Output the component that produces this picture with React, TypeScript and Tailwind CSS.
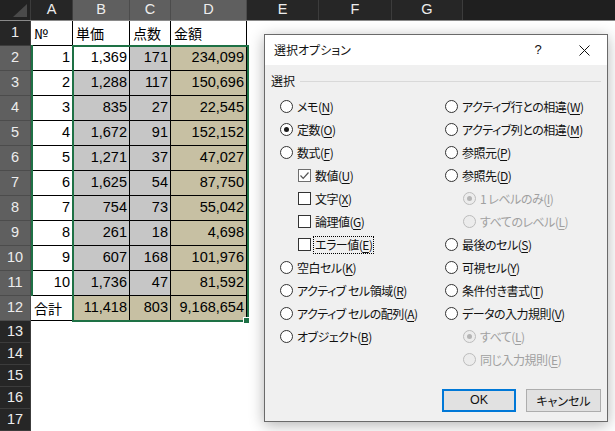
import React from 'react';

const JP = "font-['Noto_Sans_CJK_JP',sans-serif]";

const COLS = [
  { id: 'A', w: 'w-[42px]', sel: false },
  { id: 'B', w: 'w-[57px]', sel: true },
  { id: 'C', w: 'w-[41px]', sel: true },
  { id: 'D', w: 'w-[76px]', sel: true },
  { id: 'E', w: 'w-[72px]', sel: false },
  { id: 'F', w: 'w-[73px]', sel: false },
  { id: 'G', w: 'w-[71px]', sel: false },
];

const DATA = [
  ['1', '1,369', '171', '234,099'],
  ['2', '1,288', '117', '150,696'],
  ['3', '835', '27', '22,545'],
  ['4', '1,672', '91', '152,152'],
  ['5', '1,271', '37', '47,027'],
  ['6', '1,625', '54', '87,750'],
  ['7', '754', '73', '55,042'],
  ['8', '261', '18', '4,698'],
  ['9', '607', '168', '101,976'],
  ['10', '1,736', '47', '81,592'],
];

const GREY = 'bg-[#c6c6c6]';
const TAN = 'bg-[#c7c0a3]';

function RowHead({ n, sel, h }: { n: number; sel: boolean; h: string }) {
  return (
    <div
      className={`${h} w-[31px] shrink-0 flex items-center justify-center border-r border-b text-[14.5px] text-[#ededed] font-['Liberation_Sans',sans-serif] ${
        sel ? 'bg-[#5f5f5f] border-[#4c4c4c]' : 'bg-[#262626] border-[#3c3c3c]'
      }`}
    >
      {n}
    </div>
  );
}

function Cell({ w, bg, right, jp, children }: { w: string; bg: string; right?: boolean; jp?: boolean; children: React.ReactNode }) {
  return (
    <div
      className={`${w} ${bg} shrink-0 flex items-center border-r border-b border-black text-black ${
        right ? 'justify-end pr-[2px]' : 'pl-[3px]'
      } ${jp ? JP + ' text-[14px]' : "font-['Liberation_Sans',sans-serif] text-[14.5px]"}`}
    >
      {children}
    </div>
  );
}

function Sheet() {
  return (
    <div className="flex flex-col">
      {/* column headers */}
      <div className="flex h-[21px] bg-[#1f1f1f] border-b border-[#8a8a8a]">
        <div className="w-[31px] shrink-0 bg-[#222] border-r border-[#3c3c3c] relative">
          <svg className="absolute right-[3px] bottom-[3px]" width="14" height="13" viewBox="0 0 14 13">
            <polygon points="14,0 14,13 0,13" fill="#4a4a4a" />
          </svg>
        </div>
        {COLS.map((c) => (
          <div
            key={c.id}
            className={`${c.w} shrink-0 flex items-center justify-center border-r text-[14.5px] text-[#ededed] font-['Liberation_Sans',sans-serif] ${
              c.sel ? 'bg-[#5f5f5f] border-[#4c4c4c]' : 'bg-[#262626] border-[#3c3c3c]'
            }`}
          >
            {c.id}
          </div>
        ))}
        <div className="flex-1" />
      </div>

      {/* row 1 */}
      <div className="flex h-[25px] bg-white">
        <RowHead n={1} sel={false} h="h-[25px]" />
        <Cell w="w-[42px]" bg="bg-white" jp>№</Cell>
        <Cell w="w-[57px]" bg="bg-white" jp>単価</Cell>
        <Cell w="w-[41px]" bg="bg-white" jp>点数</Cell>
        <Cell w="w-[76px]" bg="bg-white" jp>金額</Cell>
      </div>

      {DATA.map((r, i) => (
        <div key={i} className="flex h-[25px] bg-white">
          <RowHead n={i + 2} sel h="h-[25px]" />
          <Cell w="w-[42px]" bg="bg-white" right>{r[0]}</Cell>
          <Cell w="w-[57px]" bg={i === 0 ? 'bg-white' : GREY} right>{r[1]}</Cell>
          <Cell w="w-[41px]" bg={GREY} right>{r[2]}</Cell>
          <Cell w="w-[76px]" bg={TAN} right>{r[3]}</Cell>
        </div>
      ))}

      {/* total row */}
      <div className="flex h-[25px] bg-white">
        <RowHead n={12} sel h="h-[25px]" />
        <Cell w="w-[42px]" bg="bg-white" jp>合計</Cell>
        <Cell w="w-[57px]" bg={TAN} right>11,418</Cell>
        <Cell w="w-[41px]" bg={TAN} right>803</Cell>
        <Cell w="w-[76px]" bg={TAN} right>9,168,654</Cell>
      </div>

      {[13, 14, 15, 16, 17].map((n) => (
        <div key={n} className="flex h-[22px] bg-white">
          <RowHead n={n} sel={false} h="h-[22px]" />
        </div>
      ))}
    </div>
  );
}

function Label({ text, k, disabled, focus }: { text: string; k: string; disabled?: boolean; focus?: boolean }) {
  return (
    <span
      className={`border px-[1px] leading-[16px] whitespace-nowrap tracking-[-0.5px] ${focus ? 'border-dotted border-black' : 'border-transparent'} ${
        disabled ? 'text-[#a0a0a0]' : 'text-[#111]'
      }`}
    >
      {text}(<span className="underline underline-offset-[2px]">{k}</span>)
    </span>
  );
}

function Radio({ text, k, checked, disabled, indent }: { text: string; k: string; checked?: boolean; disabled?: boolean; indent?: boolean }) {
  return (
    <div className={`h-[23px] flex items-center gap-[2px] ${indent ? 'pl-[18px]' : ''}`}>
      <span
        className={`w-[13px] h-[13px] shrink-0 rounded-full border flex items-center justify-center ${
          disabled ? 'border-[#bcbcbc] bg-[#ececec]' : 'border-[#333] bg-white'
        }`}
      >
        {checked && <span className={`w-[5px] h-[5px] rounded-full ${disabled ? 'bg-[#b5b5b5]' : 'bg-[#1a1a1a]'}`} />}
      </span>
      <Label text={text} k={k} disabled={disabled} />
    </div>
  );
}

function Check({ text, k, checked, focus }: { text: string; k: string; checked?: boolean; focus?: boolean }) {
  return (
    <div className="h-[23px] flex items-center gap-[2px] pl-[18px]">
      <span className={`w-[13px] h-[13px] shrink-0 border bg-white flex items-center justify-center ${checked ? 'border-[#6e6e6e]' : 'border-[#333]'}`}>
        {checked && (
          <svg width="11" height="11" viewBox="0 0 11 11">
            <path d="M1.5 5.5 L4.2 8.3 L9.5 2.5" fill="none" stroke="#555" strokeWidth="1.2" />
          </svg>
        )}
      </span>
      <Label text={text} k={k} focus={focus} />
    </div>
  );
}

function Dialog() {
  return (
    <div
      className={`absolute left-[264px] top-[34px] w-[344px] h-[388px] border border-[#6a6a6a] bg-[#f0f0f0] shadow-[0_3px_14px_rgba(0,0,0,0.3)] flex flex-col text-[12px] ${JP} [font-feature-settings:'palt']`}
    >
      <div className="h-[30px] bg-white flex items-center shrink-0">
        <span className="pl-[9px] flex-1 text-[#111]">選択オプション</span>
        <span className="w-[46px] h-full flex items-center justify-center text-[13px] text-[#111] font-['Liberation_Sans',sans-serif]">?</span>
        <span className="w-[46px] h-full flex items-center justify-center">
          <svg width="11" height="11" viewBox="0 0 11 11">
            <path d="M0.5 0.5 L10.5 10.5 M10.5 0.5 L0.5 10.5" stroke="#111" strokeWidth="1" />
          </svg>
        </span>
      </div>
      <div className="flex-1 flex flex-col pt-[7px]">
        <div className="h-[18px] flex items-center pl-[6px] pr-[6px]">
          <span className="text-[#111]">選択</span>
          <span className="flex-1 h-px bg-[#d9d9d9] ml-[5px]" />
        </div>
        <div className="grid grid-cols-[165px_1fr] pl-[15px] mt-[5px]">
          <div className="flex flex-col">
            <Radio text="メモ" k="N" />
            <Radio text="定数" k="O" checked />
            <Radio text="数式" k="F" />
            <Check text="数値" k="U" checked />
            <Check text="文字" k="X" />
            <Check text="論理値" k="G" />
            <Check text="エラー値" k="E" focus />
            <Radio text="空白セル" k="K" />
            <Radio text="アクティブ セル領域" k="R" />
            <Radio text="アクティブ セルの配列" k="A" />
            <Radio text="オブジェクト" k="B" />
          </div>
          <div className="flex flex-col">
            <Radio text="アクティブ行との相違" k="W" />
            <Radio text="アクティブ列との相違" k="M" />
            <Radio text="参照元" k="P" />
            <Radio text="参照先" k="D" />
            <Radio text="1 レベルのみ" k="I" checked disabled indent />
            <Radio text="すべてのレベル" k="L" disabled indent />
            <Radio text="最後のセル" k="S" />
            <Radio text="可視セル" k="Y" />
            <Radio text="条件付き書式" k="T" />
            <Radio text="データの入力規則" k="V" />
            <Radio text="すべて" k="L" checked disabled indent />
            <Radio text="同じ入力規則" k="E" disabled indent />
          </div>
        </div>
        <div className="flex-1" />
        <div className="flex justify-end gap-[10px] pr-[6px] pb-[9px]">
          <button className="w-[74px] h-[23px] border-2 border-[#0078d7] bg-[#e1e1e1] text-[#111] font-['Liberation_Sans',sans-serif] text-[12.5px]">
            OK
          </button>
          <button className="w-[75px] h-[23px] border border-[#adadad] bg-[#e1e1e1] text-[#111]">キャンセル</button>
        </div>
      </div>
    </div>
  );
}

export default function App() {
  return (
    <div className="relative w-[615px] h-[431px] overflow-hidden bg-white">
      <Sheet />
      {/* selection outlines */}
      <div className="absolute left-[31px] top-[45px] w-[2px] h-[251px] bg-[#1e7145]" />
      <div className="absolute left-[72px] top-[45px] w-[177px] h-[277px] border-2 border-[#1e7145]" />
      <div className="absolute left-[243px] top-[317px] w-[7px] h-[7px] bg-[#1e7145] border border-white" />
      <Dialog />
    </div>
  );
}
